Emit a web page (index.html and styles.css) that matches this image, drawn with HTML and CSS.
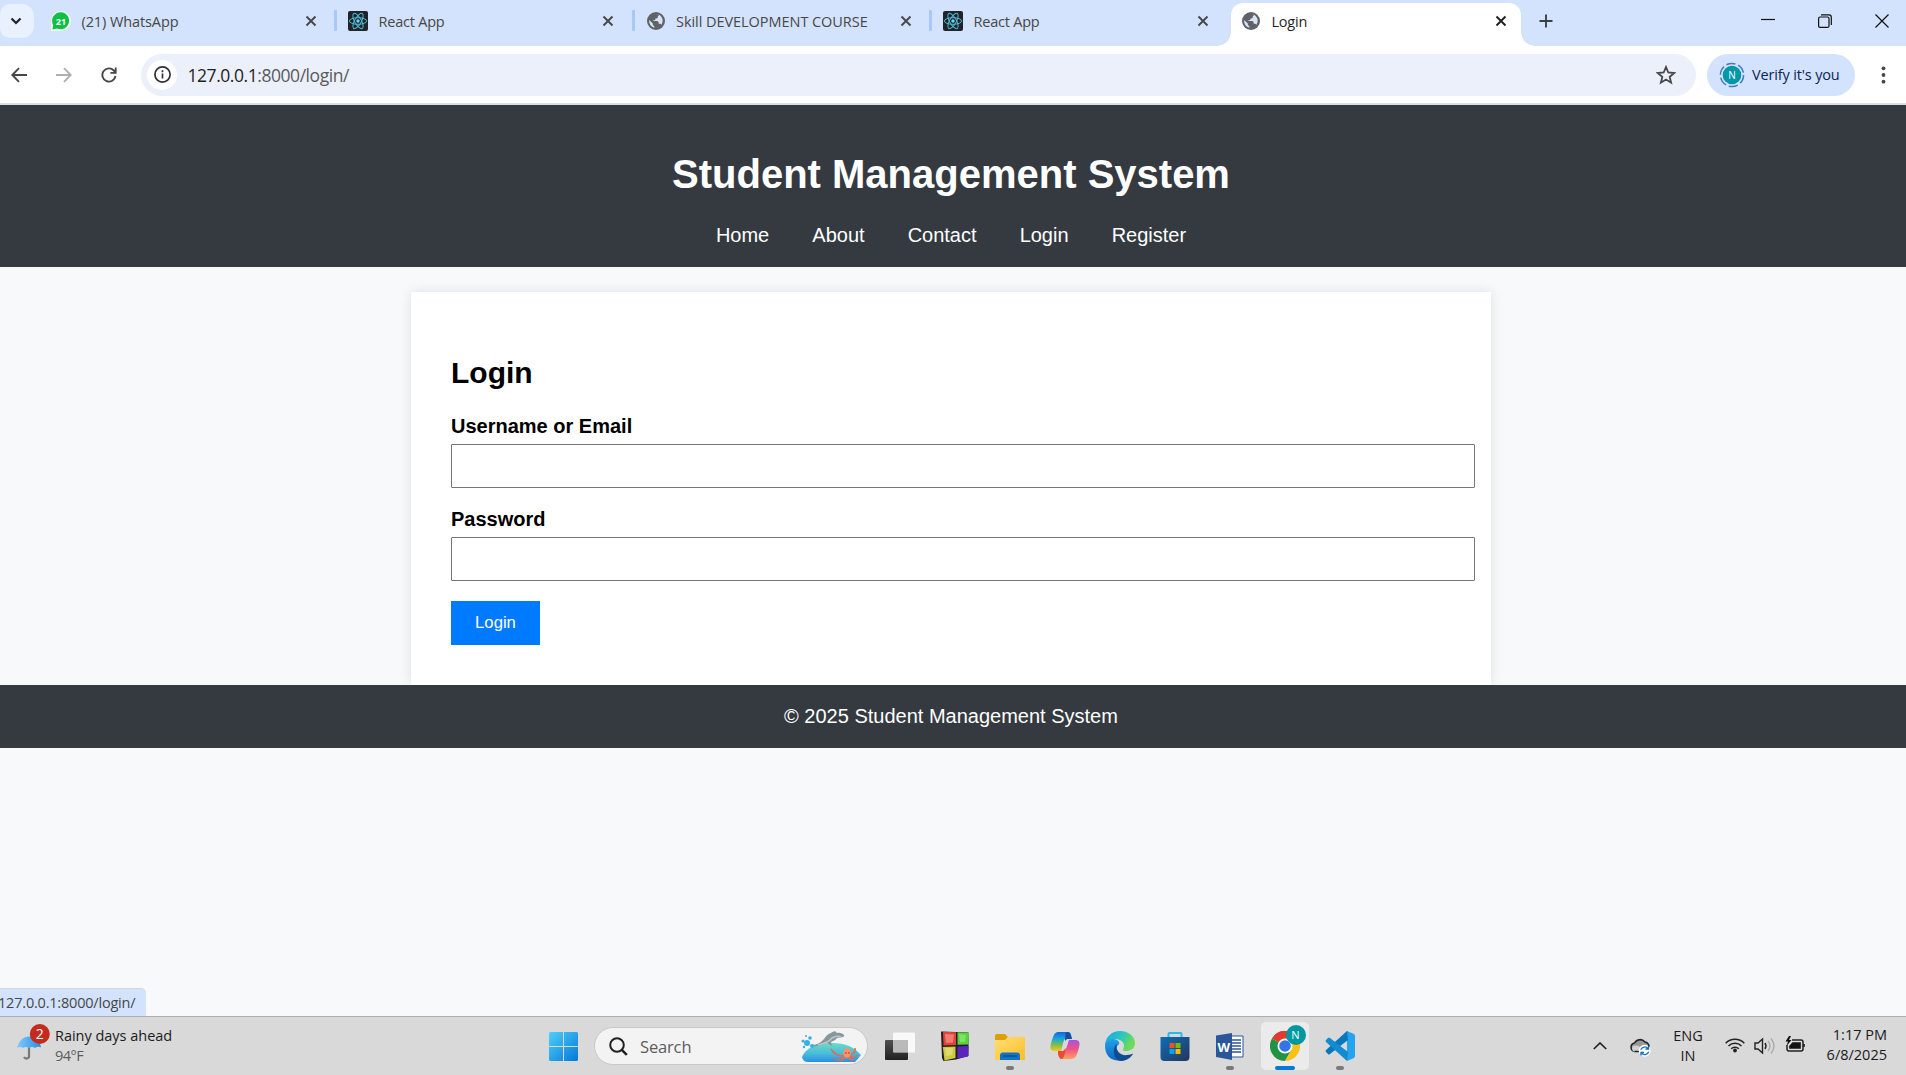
FILE: index.html
```html
<!DOCTYPE html>
<html lang="en">
<head>
<meta charset="utf-8">
<title>Login</title>
<link rel="stylesheet" href="styles.css">
</head>
<body>
<svg width="0" height="0" class="defs">
  <defs>
    <symbol id="close" viewBox="0 0 12 12"><path d="M1.5 1.5l9 9M10.5 1.5l-9 9" stroke="currentColor" stroke-width="1.9" fill="none"/></symbol>
    <symbol id="react" viewBox="0 0 20 20"><rect width="20" height="20" rx="2" fill="#20232a"/><g fill="none" stroke="#4fb9d3" stroke-width="1"><ellipse cx="10" cy="10" rx="8.6" ry="3.3"/><ellipse cx="10" cy="10" rx="8.6" ry="3.3" transform="rotate(60 10 10)"/><ellipse cx="10" cy="10" rx="8.6" ry="3.3" transform="rotate(120 10 10)"/></g><circle cx="10" cy="10" r="1.7" fill="#61dafb"/></symbol>
    <symbol id="globe" viewBox="0 0 18 18"><circle cx="9" cy="9" r="9" fill="#5f6368"/><path d="M9.500 2.200H11.800Q12.200 3.800 10.800 4.200V5.600Q10.700 6.400 9.600 6.400H8.400V7.500Q8.300 8.300 7.400 8.300H6.400V9.100H10Q11.600 9.200 11.700 10.700V11.700H13Q14.100 11.800 14.300 13Q16.200 10.500 15.600 7.500 14.500 3.500 11 2.300L9.500 2Z" fill="#d8e3f8"/><path d="M2.100 8.100L5.800 11.600V12.500Q6 13.800 7.300 14V15.800Q2.300 14.300 2.100 9Z" fill="#d8e3f8"/></symbol>
    <linearGradient id="win" x2="1" y2="1"><stop stop-color="#4fd0fb"/><stop offset="1" stop-color="#0477d8"/></linearGradient>
    <linearGradient id="sea" x2="0" y2="1"><stop stop-color="#6bdbc4"/><stop offset=".55" stop-color="#49bdd9"/><stop offset="1" stop-color="#2b8ee5"/></linearGradient>
    <linearGradient id="fold" x2="1" y2="1"><stop stop-color="#ffdf76"/><stop offset="1" stop-color="#ffbd25"/></linearGradient>
    <linearGradient id="copA" x2="0" y2="1"><stop stop-color="#1764da"/><stop offset=".35" stop-color="#15a6dc"/><stop offset=".65" stop-color="#74bc58"/><stop offset="1" stop-color="#f4cb10"/></linearGradient>
    <linearGradient id="copB" x2="0" y2="1"><stop stop-color="#a652de"/><stop offset=".5" stop-color="#ee5585"/><stop offset="1" stop-color="#ffa35e"/></linearGradient>
    <linearGradient id="edgeA" x2="1" y2=".4"><stop stop-color="#17a7e9"/><stop offset=".55" stop-color="#2cc5c0"/><stop offset="1" stop-color="#6fdd50"/></linearGradient>
    <linearGradient id="edgeB" x2="0" y2="1"><stop stop-color="#23a1e5"/><stop offset="1" stop-color="#0b68c4"/></linearGradient>
    <linearGradient id="store" x2="1" y2="1"><stop stop-color="#0e6fb8"/><stop offset="1" stop-color="#25355b"/></linearGradient>
    <linearGradient id="dark" x2="0" y2="1"><stop stop-color="#505050"/><stop offset="1" stop-color="#202020"/></linearGradient>
    <linearGradient id="umb" x2="1"><stop stop-color="#82cbfb"/><stop offset="1" stop-color="#278de9"/></linearGradient>
  </defs>
</svg>

<div class="screen">
  <div class="tabstrip">
    <div class="tab-search"><svg width="12" height="8" viewBox="0 0 12 8"><path d="M1.500 1.500L6 6l4.500-4.500" fill="none" stroke="#202124" stroke-width="2.200"/></svg></div>
    <div class="tabs">
      <div class="tab">
        <svg class="fav" viewBox="0 0 20 20"><path d="M0 20V10A10 10 0 1 1 10 20Z" fill="#eef6f2"/><path d="M1.500 18.500L2.200 14A8.500 8.500 0 1 1 6 17.500Z" fill="#0cc143"/><text x="10" y="13.500" text-anchor="middle" class="wa-count">21</text></svg>
        <span class="tab-title t-wa">(21) WhatsApp</span><svg class="close"><use href="#close"/></svg>
      </div>
      <div class="tab sep"><svg class="fav"><use href="#react"/></svg><span class="tab-title">React App</span><svg class="close"><use href="#close"/></svg></div>
      <div class="tab sep"><svg class="fav globe"><use href="#globe"/></svg><span class="tab-title t-sk">Skill DEVELOPMENT COURSE</span><svg class="close"><use href="#close"/></svg></div>
      <div class="tab sep"><svg class="fav"><use href="#react"/></svg><span class="tab-title">React App</span><svg class="close"><use href="#close"/></svg></div>
      <div class="tab active"><svg class="fav globe"><use href="#globe"/></svg><span class="tab-title">Login</span><svg class="close"><use href="#close"/></svg></div>
    </div>
    <svg class="plus" width="14" height="14" viewBox="0 0 14 14"><path d="M7 0.500v13M0.500 7h13" stroke="#3c4043" stroke-width="1.900"/></svg>
    <div class="winctl">
      <svg width="14" height="14" viewBox="0 0 14 14"><path d="M0 5.500h14" stroke="#111" stroke-width="1.200"/></svg>
      <svg width="14" height="14" viewBox="0 0 14 14"><g fill="none" stroke="#111" stroke-width="1.200"><rect x=".6" y="3" width="10.400" height="10.400" rx="1.500"/><path d="M3 .8h8a2.300 2.300 0 0 1 2.300 2.300V11"/></g></svg>
      <svg width="14" height="14" viewBox="0 0 14 14"><path d="M.5.5l13 13M13.500.5l-13 13" stroke="#111" stroke-width="1.200"/></svg>
    </div>
  </div>

  <div class="toolbar">
    <svg class="nav-ic" width="16" height="16" viewBox="0 0 16 16"><path d="M16 8H1.500M8 1.200L1.300 8 8 14.800" fill="none" stroke="#474747" stroke-width="1.900"/></svg>
    <svg class="nav-ic" width="16" height="16" viewBox="0 0 16 16"><path d="M0 8h14.500M8 1.200L14.700 8 8 14.800" fill="none" stroke="#aeb0b2" stroke-width="1.900"/></svg>
    <svg class="nav-ic" width="16" height="16" viewBox="0 0 16 16"><path d="M14.500 9A6.600 6.600 0 1 1 12.800 3.500L14.700 5.500" fill="none" stroke="#474747" stroke-width="1.900"/><path d="M15.600 .5v6.200H9.400V4.900h4.400V.5z" fill="#474747"/></svg>
    <div class="omnibox">
      <div class="info"><svg width="17" height="17" viewBox="0 0 17 17"><circle cx="8.500" cy="8.500" r="7.600" fill="none" stroke="#303134" stroke-width="1.700"/><path d="M8.500 7.500v5M8.500 4.300v1.900" stroke="#303134" stroke-width="1.700"/></svg></div>
      <span class="url"><b>127.0.0.1</b>:8000/login/</span>
      <svg class="star" width="20" height="20" viewBox="0 0 20 20"><path d="M10 2l2.300 5.500 5.900.5-4.500 3.900 1.400 5.800L10 14.600l-5.100 3.100 1.400-5.800L1.800 8l5.900-.5z" fill="none" stroke="#474747" stroke-width="1.800"/></svg>
    </div>
    <div class="verify">
      <svg width="26" height="26" viewBox="0 0 26 26"><circle cx="13" cy="13" r="11.600" fill="none" stroke="#4878b5" stroke-width="1.500" stroke-dasharray="9.200 2.950"/><circle cx="13" cy="13" r="9.300" fill="#0097a7"/><text x="13" y="16.800" text-anchor="middle" class="initial">N</text></svg>
      <span>Verify it's you</span>
    </div>
    <svg class="dots" width="5" height="18" viewBox="0 0 5 18"><g fill="#474747"><circle cx="2.500" cy="2.300" r="1.900"/><circle cx="2.500" cy="9" r="1.900"/><circle cx="2.500" cy="15.700" r="1.900"/></g></svg>
  </div>

  <div class="page">
    <header class="site-header">
      <h1>Student Management System</h1>
      <nav><a>Home</a> <a>About</a> <a>Contact</a> <a>Login</a> <a>Register</a></nav>
    </header>
    <main class="card">
      <h2>Login</h2>
      <form>
        <label for="user">Username or Email</label>
        <input id="user" type="text">
        <label for="pass">Password</label>
        <input id="pass" type="password">
        <button type="button">Login</button>
      </form>
    </main>
    <footer class="site-footer">© 2025 Student Management System</footer>
    <div class="status">127.0.0.1:8000/login/</div>
  </div>

  <div class="taskbar">
    <div class="weather">
      <svg width="34" height="38" viewBox="0 0 34 38"><path d="M13 21v12a2.800 2.800 0 0 1-5 0" fill="none" stroke="#777" stroke-width="2.200"/><path d="M1 24C3 16 8 12.500 13 12.500S24 16 25 23.500Q22 22 19 24 16 22 13 24 10 22 7 24 4 22 1 24Z" fill="url(#umb)"/><circle cx="23.800" cy="10" r="10" fill="#c42b1c"/><text x="23.800" y="15" text-anchor="middle" class="badge">2</text></svg>
      <div class="w-text"><span class="w1">Rainy days ahead</span><span class="w2">94°F</span></div>
    </div>
    <div class="apps">
      <svg class="start" width="29" height="29" viewBox="0 0 29 29"><path d="M1 0h13v14H0V1zM15 0h13l1 1v13H15zM0 15h14v14H1l-1-1zM15 15h14v13l-1 1H15z" fill="url(#win)"/></svg>
      <div class="search">
        <svg width="19" height="19" viewBox="0 0 19 19"><circle cx="8" cy="8" r="6.800" fill="none" stroke="#222" stroke-width="2"/><path d="M12.800 12.800l5 5" stroke="#222" stroke-width="2.600"/></svg>
        <span>Search</span>
        <svg class="dolphin" width="61" height="31" viewBox="0 0 61 31"><path d="M1 26C4 17 17 12 31 12S53 16 60 24Q57 28 54 31H7Q2 31 1 26Z" fill="url(#sea)"/><path d="M10 14Q18 14 23 8C27 2 32 1 34 0L36 2C39 1 42 3 43 4Q44 5 42 6L36 7Q35 9 30 11L31 15 26 12Q19 16 12 15Z" fill="#86979e"/><path d="M17 14Q27 12 31 7 36 4 40 6" fill="none" stroke="#bcc8cb" stroke-width="1.500"/><g fill="#35afe4"><circle cx="6" cy="12" r="3"/><circle cx="2" cy="10" r="1.500"/><circle cx="9" cy="7" r="1.800"/><circle cx="5" cy="5" r="1"/><circle cx="11" cy="15" r="2"/><circle cx="3" cy="16" r="1.200"/></g><g fill="none" stroke="#eb6949" stroke-width="1.500"><path d="M44 25Q35 26 30 18M43 27Q38 31 32 27M45 26Q42 29 40 30M47 26Q49 29 53 29M48 25Q54 28 56 24M48 24Q55 23 54 17"/></g><ellipse cx="46" cy="22" rx="3.800" ry="4.800" fill="#ff9067"/><circle cx="45" cy="22" r=".7" fill="#632d30"/><circle cx="48" cy="22" r=".7" fill="#632d30"/></svg>
      </div>
      <div class="app"><svg viewBox="0 0 30 30"><rect y="9" width="23" height="20" rx="1" fill="url(#dark)"/><rect x="8" y="1.500" width="22" height="20" rx="1" fill="#fff" fill-opacity=".83"/><path d="M8 9h15v12.500H8z" fill="#9a9a9a" fill-opacity=".55"/></svg></div>
      <div class="app"><svg viewBox="0 0 30 30"><path d="M1 0.500L15.500 1h1.500L28.500 1.500V25L16 28.500 3.500 30 2 27z" fill="#211d22"/><path d="M3 .8L16 1.300V14L3.500 14.500z" fill="#e0443b"/><path d="M17.500 1.300L29 1.800 28.500 13.500 17.500 13.800z" fill="#59cf42"/><path d="M2.800 16L15.500 15.500V27L4.500 29.500z" fill="#cdca40"/><path d="M17.500 15.500L28.500 15 28 25.500 17.500 27.500z" fill="#5b25bd"/><path d="M5 3l9 .5-1 8-7 .5z" fill="#f17b70"/><path d="M19 3l7 1-1 7-5 0z" fill="#80e368"/><path d="M5 17l8 0-1 7-6 1z" fill="#dddb6c"/></svg></div>
      <div class="app running"><svg viewBox="0 0 30 30"><path d="M0 5Q0 3 2 3h8l3 3-3 5H0z" fill="#dc9f08"/><path d="M0 9h10l3-3h16q1 0 1 1v21q0 1-1 1H1q-1 0-1-1z" fill="url(#fold)"/><path d="M5 29V24.500q0-3 3-3h14q3 0 3 3V29z" fill="#1274c2"/><path d="M8 25h14" stroke="#07458c" stroke-width="1.200"/></svg></div>
      <div class="app"><svg viewBox="0 0 30 30"><path d="M9 1h9c3 0 3 3 4 6H17C13 7 13 15 11 20H5C-1 20 0 15 2 9 4 3 5 1 9 1Z" fill="url(#copA)"/><path d="M17 1q3 0 4 4l1 3h-5l-2 2Q15 1 17 1Z" fill="#174aa5"/><path d="M21 28h-8c-4 0-4-3-5-6h4c4 0 5-8 7-13h6c6 0 5 5 3 11-2 6-3 8-7 8Z" fill="url(#copB)"/><path d="M8 20h5l3-3q-2 11-4 11-3 0-4-5Z" fill="#e84c38"/></svg></div>
      <div class="app"><svg viewBox="0 0 30 30"><path d="M0 15C0 6 7 0 15 0 24 0 30 6 30 12 30 18 25 20 21 20 17 20 18 18 19 16 20 11 15 8 10 8 5 8 1 11 0 15Z" fill="url(#edgeA)"/><path d="M0 14C2 8 8 7 12 9 15 11 15 13 12 15 8 23 14 27 21 27 15 31 8 30 4 26 1 23 0 19 0 14Z" fill="url(#edgeB)"/><path d="M12 13C10 20 16 25 22 24 25 24 28 22 28 23 24 29 19 30 16 30 9 30 6 17 12 13Z" fill="#104d90"/></svg></div>
      <div class="app"><svg viewBox="0 0 30 30"><path d="M8.500 8V3q0-1 1-1h11q1 0 1 1v5" fill="none" stroke="#27b9f1" stroke-width="2"/><path d="M.5 6h29v20q0 4-4 4h-21q-4 0-4-4z" fill="url(#store)"/><path d="M9.500 12h5v5h-5z" fill="#f25022"/><path d="M15.500 12h5v5h-5z" fill="#7fba00"/><path d="M9.500 18h5v5h-5z" fill="#00a4ef"/><path d="M15.500 18h5v5h-5z" fill="#ffb900"/></svg></div>
      <div class="app running"><svg viewBox="0 0 30 30"><path d="M15 5h13v21H15z" fill="#fff" stroke="#2a579a"/><path d="M17 9h9M17 12h9M17 15h9M17 18h9M17 21h9" stroke="#2a579a" stroke-width="1.300"/><path d="M1 4.500L17 2v27L1 26z" fill="#2b579a"/><text x="8.800" y="20.500" text-anchor="middle" class="word">W</text></svg></div>
      <div class="app current"><svg viewBox="0 0 30 30"><path d="M15 15L2 7.500A15 15 0 0 1 28 7.500Z" fill="#e23a2e"/><path d="M15 15L2 7.500A15 15 0 0 0 15 30L21.500 18.700Z" fill="#229342"/><path d="M15 15L21.500 18.700 15 30A15 15 0 0 0 28 7.500H15Z" fill="#fbc116"/><path d="M2 7.500A15 15 0 0 1 28 7.500H15Z" fill="#e23a2e"/><circle cx="15" cy="15" r="7.500" fill="#fff"/><circle cx="15" cy="15" r="5.800" fill="#3474e8"/></svg><span class="profile">N</span></div>
      <div class="app running"><svg viewBox="0 0 30 30"><path d="M22 0l7 3q1 1 1 2v20q0 1-1 2l-7 3z" fill="#25a3ef"/><path d="M22 0L1 19q-1 1 0 2l2 2q1 1 2 0L23 9z" fill="#0877bb"/><path d="M22 30L1 11Q0 10 1 9l2-2q1-1 2 0l18 14z" fill="#138bd0"/></svg></div>
    </div>
    <div class="tray">
      <svg class="up" width="14" height="8" viewBox="0 0 14 8"><path d="M.8 7L7 1l6.200 6" fill="none" stroke="#222" stroke-width="1.700"/></svg>
      <svg class="cloud" width="21" height="19" viewBox="0 0 21 19"><path d="M5 13.500A4.300 4.300 0 0 1 4.500 5 6.300 6.300 0 0 1 15 4a4.500 4.500 0 0 1 4 5" fill="#999" stroke="#222" stroke-width="1.500"/><path d="M3 8q6-2 10 4v2H5Q2 13 2 10Z" fill="#d1d1d1"/><path d="M4.500 13.500H10" stroke="#222" stroke-width="1.500"/><circle cx="14.700" cy="12.800" r="6" fill="#fff"/><path d="M10.800 11.800A4.200 4.200 0 0 1 18 10.500M18.500 8v3h-3M18.700 13.800A4.200 4.200 0 0 1 11.500 15.200M11 17.500v-3h3" fill="none" stroke="#1670bd" stroke-width="1.300"/></svg>
      <div class="lang"><span>ENG</span><span>IN</span></div>
      <svg class="wifi" width="20" height="16" viewBox="0 0 20 16"><g fill="none" stroke="#222" stroke-width="1.500"><path d="M.7 6.200a13 13 0 0 1 18.600 0M3.500 9a9.200 9.200 0 0 1 13 0M6.200 11.700a5.400 5.400 0 0 1 7.600 0"/></g><circle cx="10" cy="13.500" r="1.900" fill="#222"/></svg>
      <svg class="vol" width="21" height="18" viewBox="0 0 21 18"><path d="M1 6h3l4.500-4v14L4 12H1zM11 6q2 3 0 6" fill="none" stroke="#222" stroke-width="1.400"/><path d="M14 4q4 5 0 10M17 1.500q6 7.500 0 15" fill="none" stroke="#aaa" stroke-width="1.400"/></svg>
      <svg class="bat" width="21" height="17" viewBox="0 0 21 17"><path d="M7 4h9q2 0 2 2v7q0 2-2 2H4q-2 0-2-2V9" fill="none" stroke="#222" stroke-width="1.500"/><path d="M7.500 6.200h8.300v6.600H4.200V10z" fill="#111"/><path d="M18.800 8v3" stroke="#222" stroke-width="2"/><path d="M4 0L.5 5.500H3L1.500 10 6.500 4H4L6 0z" fill="#111"/></svg>
      <div class="clock"><span>1:17 PM</span><span class="date">6/8/2025</span></div>
    </div>
  </div>
</div>
</body>
</html>
```
FILE: styles.css
```css
* { box-sizing: border-box; }
body { margin: 0; background: #f8f9fa; font-family: "Open Sans", "Noto Sans", sans-serif; overflow: hidden; }
svg { display: block; flex: none; }
.defs { position: absolute; }
.screen { display: flex; flex-direction: column; width: 1906px; height: 1075px; }

/* Tab strip */
.tabstrip { display: flex; height: 46px; background: #d3e2fd; flex: none; }
.tab-search { width: 34px; height: 34px; margin-top: 4px; background: #e9f0fe; border-radius: 10px 12px 12px 10px; display: flex; align-items: center; justify-content: center; padding-right: 2px; }
.tabs { display: flex; margin-left: 4px; width: 1488px; }
.tab { width: 297.5px; height: 36px; margin-top: 3px; flex: none; display: flex; align-items: center; padding-left: 13px; position: relative; color: #474747; font-size: 14.5px; letter-spacing: -.22px; }
.tab.sep { padding-left: 12.500px; }
.tab.sep::before { content: ""; position: absolute; left: -1.5px; top: 7px; width: 3px; height: 21px; border-radius: 1px; background: #a8c7fa; }
.fav { width: 20px; height: 20px; }
.fav.globe { width: 18px; height: 18px; margin: 0 1px; }
.wa-count { font: bold 9px "Open Sans", sans-serif; fill: #fff; letter-spacing: 0; }
.tab-title { margin-left: 10.500px; padding-top: 1px; flex: 1; white-space: nowrap; line-height: 20px; }
.t-wa { letter-spacing: -.1px; }
.t-sk { letter-spacing: -.05px; }
.close { width: 12px; height: 12px; margin-right: 19px; }
.tab.active { background: #fff; height: 43px; width: 290px; margin-left: 3px; padding: 0 0 7px 10px; border-radius: 12px 12px 0 0; color: #1f1f1f; }
.tab.active .close { margin-right: 14px; }
.tab.active::before, .tab.active::after { content: ""; position: absolute; bottom: 0; width: 14px; height: 14px; }
.tab.active::before { left: -14px; background: radial-gradient(circle at 0 0, transparent 13.500px, #fff 14px); }
.tab.active::after { right: -14px; background: radial-gradient(circle at 100% 0, transparent 13.500px, #fff 14px); }
.plus { margin: 14px 0 0 13px; }
.winctl { display: flex; gap: 43px; margin: 14px 17px 0 auto; }

/* Toolbar */
.toolbar { display: flex; align-items: center; height: 59px; padding: 1px 20px 1px 10.5px; background: #fff; border-bottom: 2px solid #dcdfdf; flex: none; }
.nav-ic { margin-right: 29px; }
.omnibox { display: flex; align-items: center; width: 1555px; height: 42px; margin-left: -4.5px; border-radius: 21px; background: #ecf0fa; padding: 0 20px 0 6px; }
.info { width: 30px; height: 30px; border-radius: 50%; background: #fff; display: flex; align-items: center; justify-content: center; }
.url { margin-left: 10.5px; flex: 1; font-size: 17.5px; color: #5a5a5a; letter-spacing: -.45px; padding-top: 1px; }
.url b { font-weight: 400; color: #1f1f1f; }
.verify { display: flex; align-items: center; gap: 7px; width: 148px; height: 42px; margin-left: 11px; padding-left: 12px; background: #d3e3fd; border-radius: 21px; font-size: 14.5px; letter-spacing: -.15px; color: #0c2556; white-space: nowrap; }
.initial { font: 10px "Open Sans", sans-serif; fill: #fff; }
.dots { margin-left: auto; }

/* Web page */
.page { position: relative; flex: 1; width: 1902px; font: 20px "Liberation Sans", Arial, sans-serif; min-height: 0; }
.site-header { height: 162px; margin-right: -4px; padding: 46px 4px 0 0; background: #343a40; color: #fff; text-align: center; }
.site-header h1 { margin: 0; font-size: 40px; line-height: 46px; }
.site-header nav { margin-top: 27px; line-height: 23px; }
.site-header a { display: inline-block; margin: 0 18.750px; }
.card { width: 1080px; height: 393px; margin: 25px auto 0; padding: 63px 40px 0; background: #fff; box-shadow: 0 0 12.500px rgba(0,0,0,.1); }
.card h2 { margin: 0 0 25px; font-size: 30px; line-height: 35px; }
label { display: block; font-weight: bold; line-height: 23px; margin-bottom: 6px; }
input { display: block; width: 1024px; height: 44px; margin: 0 0 20px; border: 1px solid #767676; border-radius: 1px; background: #fff; }
button { display: block; width: 89px; height: 44px; padding: 0; border: 0; background: #007bff; color: #fff; font: 16.667px "Liberation Sans", Arial, sans-serif; }
.site-footer { position: relative; height: 63px; margin-right: -4px; padding-right: 4px; background: #343a40; color: #fff; text-align: center; line-height: 63px; }
.status { position: absolute; left: 0; bottom: 0; width: 146px; height: 28px; background: #d3e3fd; border-top: 1px solid #d5d9df; border-radius: 0 5px 0 0; font: 14.5px/28px "Open Sans", sans-serif; letter-spacing: -.2px; color: #474747; text-indent: -2px; white-space: nowrap; }

/* Taskbar */
.taskbar { display: flex; height: 59px; background: #d9d9d9; border-top: 1px solid #adadad; flex: none; color: #1b1b1b; font-size: 14.5px; }
.weather { display: flex; width: 549px; padding: 7px 0 0 16px; }
.w-text { display: flex; flex-direction: column; margin: 2px 0 0 5px; line-height: 20px; }
.w1 { letter-spacing: -.02px; }
.w2 { color: #5c5c5c; letter-spacing: -.5px; }
.badge { font: 14px "Open Sans", sans-serif; fill: #fff; }
.apps { display: flex; }
.start { margin-top: 15px; }
.search { display: flex; align-items: center; width: 274px; height: 38px; margin: 10px 4px 0 16px; padding: 0 5px 0 14px; border-radius: 19px; background: #f3f3f3; border: 1px solid #c9c9c9; font-size: 16.5px; letter-spacing: -.15px; color: #5d5d5d; }
.search span { margin-left: 12px; padding-top: 1px; flex: 1; }
.app { position: relative; width: 55px; height: 58px; padding: 14px 12.500px 0; }
.app svg { width: 30px; height: 30px; position: relative; }
.running::after, .current::after { content: ""; position: absolute; bottom: 5px; left: 23.500px; width: 8px; height: 4px; border-radius: 2px; background: #7a7a7a; }
.current::before { content: ""; position: absolute; left: 3.500px; top: 5px; width: 48px; height: 48px; border-radius: 5px; background: #ebebeb; }
.current::after { width: 20px; left: 17.500px; background: #0778d4; }
.profile { position: absolute; left: 28.500px; top: 8px; width: 20px; height: 20px; border-radius: 50%; background: #0097a0; color: #fff; text-align: center; font-size: 11px; line-height: 20px; }
.word { font: bold 13px "Open Sans", sans-serif; fill: #fff; }
.tray { display: flex; align-items: flex-start; margin-left: auto; padding-right: 19px; }
.up { margin: 25px 23px 0 0; }
.cloud { margin: 21px 22px 0 0; }
.lang, .clock { display: flex; flex-direction: column; line-height: 20px; }
.lang { width: 30px; margin: 9px 22px 0 0; align-items: center; }
.wifi { margin: 20px 9px 0 0; }
.vol { margin: 20px 10px 0 0; }
.bat { margin: 19px 0 0; }
.clock { width: 81px; margin-top: 8px; align-items: flex-end; }
```
